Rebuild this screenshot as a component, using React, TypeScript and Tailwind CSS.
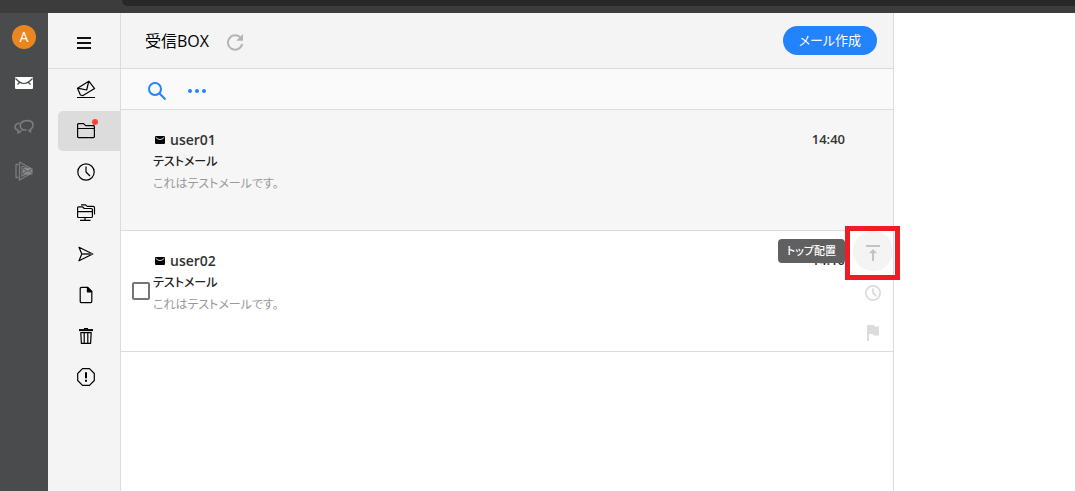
import React from 'react';

interface Mail {
  id: string;
  sender: string;
  subject: string;
  preview: string;
  time: string;
  hovered: boolean;
}

const mails: Mail[] = [
  { id: 'm1', sender: 'user01', subject: 'テストメール', preview: 'これはテストメールです。', time: '14:40', hovered: false },
  { id: 'm2', sender: 'user02', subject: 'テストメール', preview: 'これはテストメールです。', time: '14:10', hovered: true },
];

const Line: React.FC<{ children: React.ReactNode }> = ({ children }) => (
  <svg className="h-5 w-5" viewBox="0 0 20 20" fill="none" stroke="#000" strokeWidth="1.2" strokeLinejoin="round">
    {children}
  </svg>
);

const folders = [
  {
    label: '未読メール',
    icon: (
      <Line>
        <path d="M1.5 8.2 12.8 1.2 18.6 8.6 7 15.6 4.4 15z M1.5 8.2 10.7 10 12.8 1.2 M1 17.5h18" />
      </Line>
    ),
  },
  {
    label: '受信BOX',
    icon: (
      <Line>
        <path d="M1.6 15.6V3.6q0-1 1-1h5l2 2h7.8q1 0 1 1v10q0 1-1 1H2.6q-1 0-1-1z M1.6 7.5h16.8" />
      </Line>
    ),
  },
  {
    label: '予約送信',
    icon: (
      <Line>
        <circle cx="10" cy="10" r="8.2" />
        <path d="M10 4.5V10l4 4" />
      </Line>
    ),
  },
  {
    label: '共有フォルダ',
    icon: (
      <Line>
        <path d="M1.6 13.5V4.8q0-1 1-1h4l1.6 1.7h7.2q1 0 1 1v7q0 1-1 1H2.6q-1 0-1-1z M1.6 8.6h14.8 M9 14.5v3 M4 17.4h10.5 M5 1.9h4.6l1.6 1.5h6q1.3 0 1.3 1.3v6.8" />
      </Line>
    ),
  },
  {
    label: '送信済み',
    icon: (
      <Line>
        <path d="M3 3.2 16.8 10 3 16.8 5.8 10z" />
        <path d="M5.8 10h11" stroke="#555" strokeWidth="2" />
      </Line>
    ),
  },
  {
    label: '下書き',
    icon: (
      <Line>
        <path d="M5.5 2.4h6.3l4 4v10.2q0 1-1 1H5.2q-1 0-1-1V3.4q0-1 1.3-1z" />
        <path d="M11.4 2.4v4.4h4.4z" fill="#000" />
      </Line>
    ),
  },
  {
    label: 'ゴミ箱',
    icon: (
      <Line>
        <path d="M3 4.1h14" strokeWidth="2" />
        <path d="M8 2.6h4" />
        <path d="M4.8 6.6l.6 10.8h9.2l.6-10.8z M8.2 6.6v10.6 M11.8 6.6v10.6" />
      </Line>
    ),
  },
  {
    label: '迷惑メール',
    icon: (
      <Line>
        <path d="M6.5 1.7h7l4.8 4.8v7l-4.8 4.8h-7L1.7 13.5v-7z" />
        <path d="M10 5.3v6 M10 12.8v2" strokeWidth="2" />
      </Line>
    ),
  },
];

const BrowserEdge: React.FC = () => (
  <div className="h-[13px] shrink-0 bg-[#3c3c3c] pl-[122px]">
    <div className="h-[6px] rounded-bl-xl bg-[#282828]" />
  </div>
);

const AppRail: React.FC = () => (
  <aside className="flex w-12 shrink-0 flex-col items-center bg-[#4a4b4c] pt-3">
    <button aria-label="アカウント" className="mb-3 h-6 w-6 rounded-full bg-[#ea8620] text-sm leading-6 text-white">A</button>
    <button aria-label="メール" className="flex h-11 w-12 items-center justify-center">
      <svg className="h-3 w-[18px]" viewBox="0 0 18 12" fill="none">
        <rect width="18" height="12" rx="1" fill="#fff" />
        <path d="M.5 1.5Q5 6.5 9 6.5t8.5-5 M2.5 7.5l2.5-2.500 M15.5 7.5l-2.5-2.5" stroke="#4a4b4c" strokeWidth="1.2" />
      </svg>
    </button>
    <button aria-label="チャット" className="flex h-11 w-12 items-center justify-center">
      <svg className="h-4 w-5" viewBox="0 0 20 16" fill="none" stroke="#7c7c7c" strokeWidth="1.6" strokeLinejoin="round">
        <path d="M6.2 7Q6.200 1.600 13 1.600q6 0 6 4.200 0 3-2.400 4.600L16.500 13l-2.200-2" />
        <path d="M12.500 11Q6.500 11.500 6.200 7" />
        <path d="M5.500 4Q1 5 1 8q0 2.400 3.200 3.300L4 14l3.500-2.200" />
      </svg>
    </button>
    <button aria-label="ドライブ" className="flex h-11 w-12 items-center justify-center">
      <svg className="h-5 w-[18px]" viewBox="0 0 18 20" fill="none" stroke="#7c7c7c" strokeWidth="1.3">
        <path d="M1 3.5v13 M.5 3.5h3 M.5 16.5h3 M4.5 1v18L16 12.5 M4.5 1 16 7.5 M7 5v10l5-2 M7 5l5 2" />
        <rect x="8" y="7" width="9.5" height="6.5" fill="#8a8a8a" stroke="none" />
        <path d="M8 7.5l4.7 3 4.8-3 M8 13l3-3 M17.5 13l-3-3" stroke="#4a4b4c" strokeWidth=".8" />
      </svg>
    </button>
  </aside>
);

const FolderNav: React.FC = () => (
  <nav className="flex w-[73px] shrink-0 flex-col border-r border-[#dcdcdc] bg-[#f4f4f4]">
    <div className="flex h-14 shrink-0 items-center border-b border-[#dcdcdc] pt-1 pl-7">
      <button aria-label="メニュー" className="flex h-5 w-5 items-center">
        <svg className="h-3 w-4" viewBox="0 0 16 12" stroke="#111" strokeWidth="2">
          <path d="M1 1h14 M1 6h14 M1 11h14" />
        </svg>
      </button>
    </div>
    <div className="-mr-px flex flex-col gap-px pt-px pl-[10px]">
      {folders.map((f, i) => (
        <button
          key={f.label}
          aria-label={f.label}
          className={`relative flex h-10 items-center rounded-l-[5px] pl-[18px] ${i === 1 ? 'bg-[#dcdcdc]' : ''}`}
        >
          {f.icon}
          {i === 1 && <span className="absolute top-2 left-[34px] h-[6px] w-[6px] rounded-full bg-[#ff4136]" />}
        </button>
      ))}
    </div>
  </nav>
);

const RowActions: React.FC = () => (
  <>
    <div className="absolute top-0 right-0 flex flex-col text-[#dcdcdc]">
      <button aria-label="トップ配置" className="flex h-10 w-10 items-center justify-center rounded-full bg-[#f4f4f4] pt-1">
        <svg className="h-4 w-[14px]" viewBox="0 0 14 16" fill="#c3c3c3">
          <path d="M0 0h14v2H0z M7 4l4 4.2H8V16H6V8.2H3z" />
        </svg>
      </button>
      <button aria-label="スヌーズ" className="flex h-10 w-10 items-center justify-center pt-1">
        <svg className="h-4 w-4" viewBox="0 0 16 16" fill="none" stroke="currentColor" strokeWidth="1.8">
          <circle cx="8" cy="8" r="7.1" />
          <path d="M8 3.5V8l3.5 3.3" />
        </svg>
      </button>
      <button aria-label="フラグ" className="flex h-10 w-10 items-center justify-center pt-1">
        <svg className="h-4 w-3" viewBox="0 0 12 16" fill="currentColor">
          <path d="M0 0h7l.5 1.5H12v9H6.500L6 9H2v7H0z" />
        </svg>
      </button>
    </div>
    <div role="tooltip" className="absolute top-2 right-12 flex h-6 items-center rounded bg-[#606060] px-[9px] text-[11px] font-medium whitespace-nowrap text-white">
      トップ配置
    </div>
    <div className="absolute -top-[5px] -right-[7px] h-[54px] w-[55px] border-[5px] border-[#ee1c25]" />
  </>
);

const MailRow: React.FC<{ mail: Mail }> = ({ mail }) => (
  <li className={`relative flex h-[121px] border-b border-[#dcdcdc] pr-12 ${mail.hovered ? 'bg-white' : 'bg-[#f6f6f6]'}`}>
    <div className="flex w-8 items-center justify-end pr-[3px]">
      {mail.hovered && (
        <input type="checkbox" aria-label={`${mail.sender}を選択`} className="h-[18px] w-[18px] shrink-0 appearance-none rounded-xs border-2 border-[#757575] bg-white" />
      )}
    </div>
    <div className="flex-1 pt-[19px]">
      <div className="flex h-[22px] items-center justify-between text-[#333]">
        <div className="flex items-center gap-[5px] pl-[2px] text-sm font-semibold">
          <svg className="h-2 w-[10px]" viewBox="0 0 10 8">
            <rect width="10" height="8" rx="1" fill="#000" />
            <path d="M.8 1.5Q5 5.5 9.2 1.5" fill="none" stroke="#ddd" />
          </svg>
          {mail.sender}
        </div>
        <time className="text-[13px] font-semibold">{mail.time}</time>
      </div>
      <div className="text-xs leading-[22px] font-medium text-[#222]">{mail.subject}</div>
      <div className="text-xs leading-[22px] text-[#999]">{mail.preview}</div>
    </div>
    {mail.hovered && <RowActions />}
  </li>
);

const MailList: React.FC = () => (
  <main className="flex min-w-0 flex-1 flex-col border-r border-[#dcdcdc] bg-white">
    <header className="flex h-14 shrink-0 items-center border-b border-[#dcdcdc] bg-[#f4f4f4] pr-4 pl-6">
      <h1 className="text-base text-black">受信BOX</h1>
      <button aria-label="更新" className="ml-4 h-5 w-5">
        <svg className="h-5 w-5" viewBox="0 0 20 20" fill="none" stroke="#b4b4b4" strokeWidth="2">
          <path d="M15.8 7A7.2 7.2 0 1 0 17.2 13" />
          <path d="M18 3v6.8h-6.8z" fill="#b4b4b4" stroke="none" />
        </svg>
      </button>
      <button className="ml-auto h-[29px] rounded-full bg-[#2383ff] px-4 text-[13px] text-white">メール作成</button>
    </header>
    <div className="flex h-[41px] shrink-0 items-center gap-5 border-b border-[#dcdcdc] bg-[#fafafa] pt-1 pl-[26px] text-[#2383ff]">
      <button aria-label="検索" className="h-5 w-5">
        <svg className="h-5 w-5" viewBox="0 0 20 20" fill="none" stroke="currentColor" strokeWidth="2">
          <circle cx="8" cy="8" r="6" />
          <path d="M12.3 12.3 18.5 18.5" />
        </svg>
      </button>
      <button aria-label="その他" className="h-5 w-5">
        <svg className="h-5 w-5" viewBox="0 0 20 20" fill="currentColor">
          <circle cx="3" cy="10" r="2" />
          <circle cx="10" cy="10" r="2" />
          <circle cx="17" cy="10" r="2" />
        </svg>
      </button>
    </div>
    <ul>
      {mails.map((m) => <MailRow key={m.id} mail={m} />)}
    </ul>
  </main>
);

export default function App() {
  return (
    <div className="flex min-h-screen flex-col bg-white font-['Open_Sans','Noto_Sans_CJK_JP',sans-serif] [font-feature-settings:'palt']">
      <BrowserEdge />
      <div className="flex flex-1">
        <AppRail />
        <FolderNav />
        <MailList />
        <section aria-label="プレビュー" className="w-[181px] shrink-0" />
      </div>
    </div>
  );
}
